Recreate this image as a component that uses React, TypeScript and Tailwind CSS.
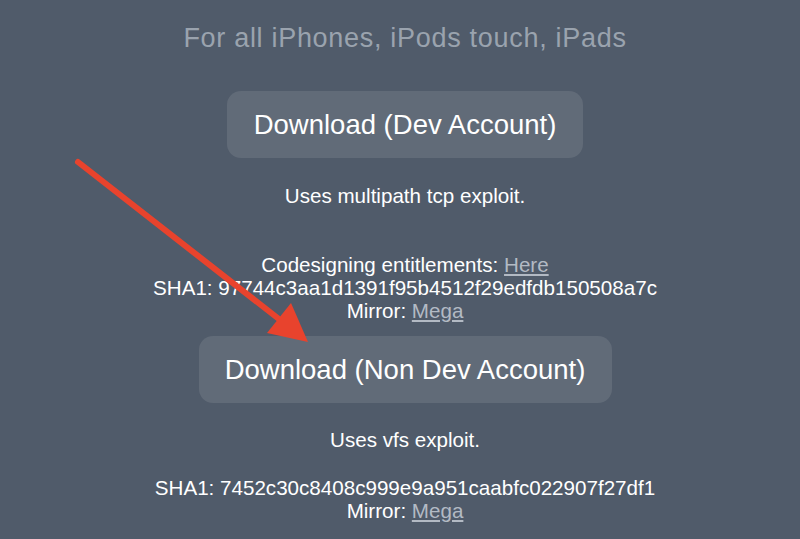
import React from 'react';

const Arrow: React.FC = () => (
  <svg
    className="absolute left-0 top-0 pointer-events-none"
    width="800"
    height="539"
    viewBox="0 0 800 539"
  >
    <line x1="78" y1="162" x2="284" y2="323" stroke="#e8432d" strokeWidth="6" strokeLinecap="round" />
    <polygon points="308,342 267,333 291,303" fill="#e8432d" />
  </svg>
);

const LinkText: React.FC<{ children: React.ReactNode }> = ({ children }) => (
  <a href="#" className="text-[#b3bac4] underline underline-offset-2">
    {children}
  </a>
);

const App: React.FC = () => {
  return (
    <div
      className="relative w-[800px] h-[539px] overflow-hidden bg-[#505b6a] text-white flex flex-col items-center pl-[10px]"
      style={{ fontFamily: '"Liberation Sans", Arial, sans-serif' }}
    >
      <h2 className="mt-[24px] text-[27px] leading-[28px] tracking-[0.7px] text-[#9aa3ae]">
        For all iPhones, iPods touch, iPads
      </h2>

      <button className="mt-[39px] w-[356px] h-[67px] rounded-[14px] bg-[#616b78] text-[27.5px] text-white">
        Download (Dev Account)
      </button>

      <div className="mt-[26px] text-[20.6px] leading-[23px] text-center">
        <p>Uses multipath tcp exploit.</p>
        <p className="mt-[46px]">
          Codesigning entitlements: <LinkText>Here</LinkText>
        </p>
        <p>SHA1: 97744c3aa1d1391f95b4512f29edfdb150508a7c</p>
        <p>
          Mirror: <LinkText>Mega</LinkText>
        </p>
      </div>

      <button className="mt-[14px] w-[413px] h-[67px] rounded-[14px] bg-[#616b78] text-[27.5px] text-white">
        Download (Non Dev Account)
      </button>

      <div className="mt-[25px] text-[20.6px] leading-[23px] text-center">
        <p>Uses vfs exploit.</p>
        <p className="mt-[25px]">SHA1: 7452c30c8408c999e9a951caabfc022907f27df1</p>
        <p>
          Mirror: <LinkText>Mega</LinkText>
        </p>
      </div>

      <Arrow />
    </div>
  );
};

export default App;
